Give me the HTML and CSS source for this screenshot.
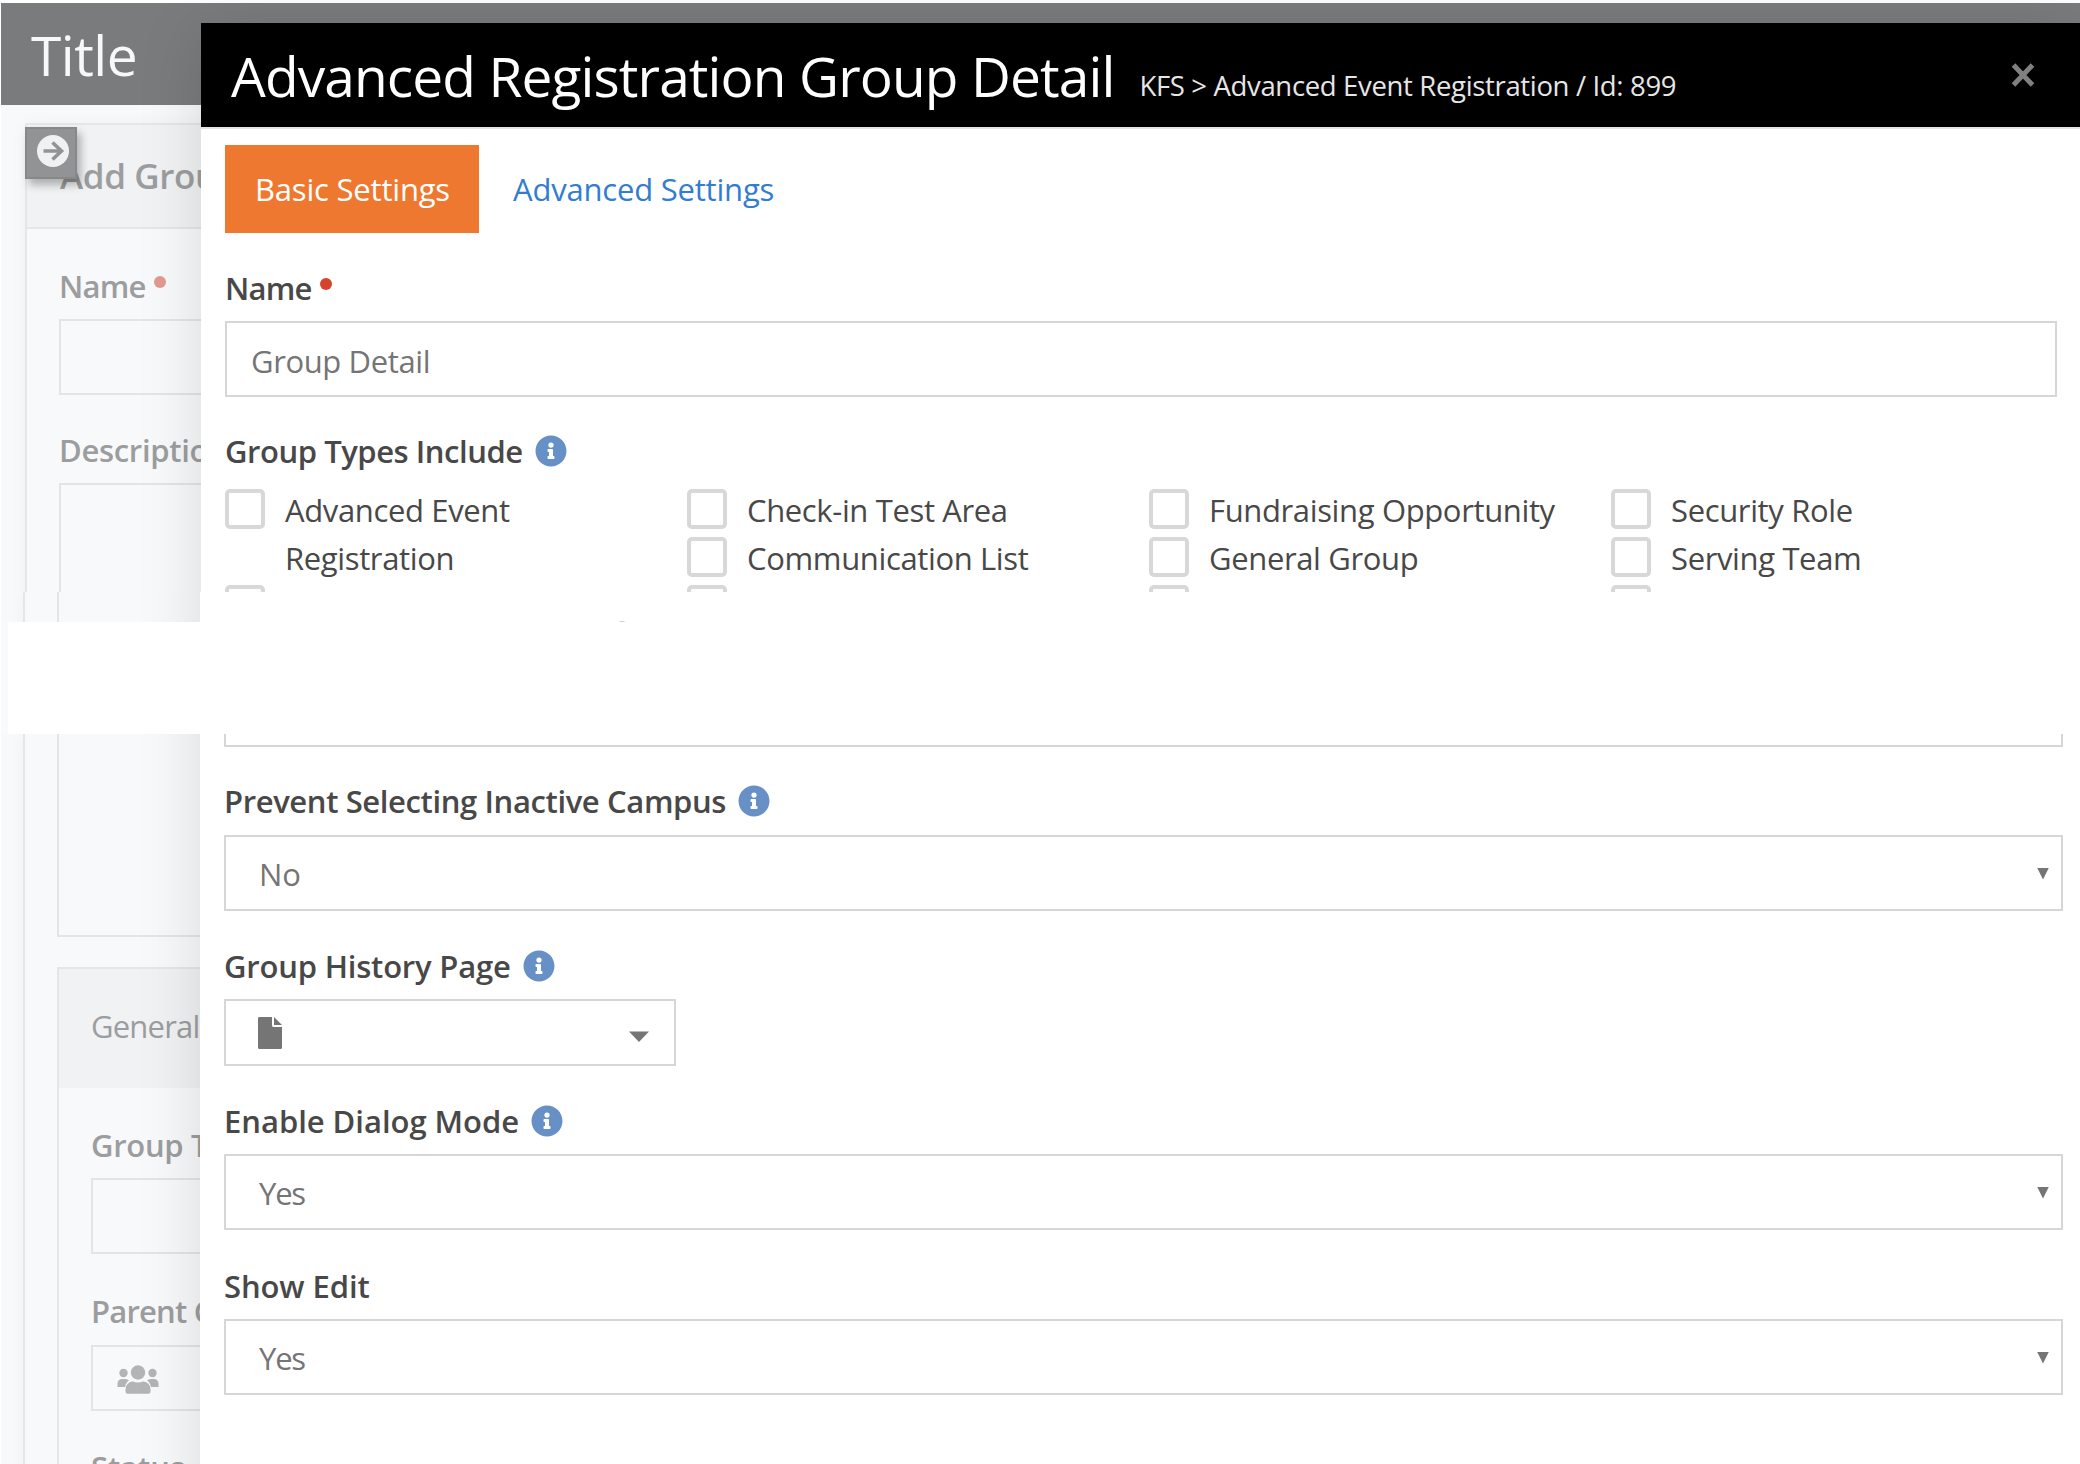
FILE: index.html
```html
<!DOCTYPE html>
<html lang="en">
<head>
<meta charset="utf-8">
<title>Advanced Registration Group Detail</title>
<link rel="stylesheet" href="styles.css">
</head>
<body>
<svg class="defs" width="0" height="0">
  <symbol id="info" viewBox="0 0 512 512"><path fill="currentColor" d="M256 8C119 8 8 119 8 256s111 248 248 248 248-111 248-248S393 8 256 8zm0 110a42 42 0 1 1 0 84 42 42 0 0 1 0-84zm56 254c0 6.600-5.400 12-12 12h-88c-6.600 0-12-5.400-12-12v-24c0-6.600 5.400-12 12-12h12v-64h-12c-6.600 0-12-5.400-12-12v-24c0-6.600 5.400-12 12-12h64c6.600 0 12 5.400 12 12v100h12c6.600 0 12 5.400 12 12z"/></symbol>
</svg>

<section class="slice slice-top">
  <div class="page">
    <header class="page-header"><h1 class="page-title">Title</h1></header>
    <div class="panel panel-main">
      <div class="panel-heading"><span>Add Group</span></div>
      <div class="panel-body">
        <label class="label label-name"><span>Name</span><i class="dot"></i></label>
        <div class="input"></div>
        <label class="label"><span>Description</span></label>
        <div class="input tall"></div>
      </div>
    </div>
    <button class="drawer-toggle"><svg width="32" height="32" viewBox="0 0 32 32"><circle cx="16" cy="16" r="16" fill="#eff1f2"/><path d="M6.500 16H24M15.500 7.500L24.500 16L15.500 24.500" fill="none" stroke="#929394" stroke-width="3.600"/></svg></button>
  </div>
  <div class="modal modal-start">
    <header class="modal-header">
      <h2 class="modal-title">Advanced Registration Group Detail</h2>
      <small class="modal-sub">KFS &gt; Advanced Event Registration / Id: 899</small>
      <button class="close"><svg width="24" height="24" viewBox="0 0 24 24"><path d="M2.500 2L21.500 22M21.500 2L2.500 22" stroke="#808080" stroke-width="5"/></svg></button>
    </header>
    <div class="modal-body">
      <nav class="tabs"><a class="tab active"><span>Basic Settings</span></a><a class="tab"><span>Advanced Settings</span></a></nav>
      <label class="label label-name"><span>Name</span><i class="dot"></i></label>
      <div class="input text-input"><span>Group Detail</span></div>
      <label class="label label-types"><span>Group Types Include</span><svg class="info"><use href="#info"/></svg></label>
      <div class="checks">
        <div class="col"><div class="check"><i></i><span>Advanced Event<br>Registration</span></div><div class="check"><i></i></div></div>
        <div class="col"><div class="check"><i></i><span>Check-in Test Area</span></div><div class="check"><i></i><span>Communication List</span></div><div class="check"><i></i></div></div>
        <div class="col"><div class="check"><i></i><span>Fundraising Opportunity</span></div><div class="check"><i></i><span>General Group</span></div><div class="check"><i></i></div></div>
        <div class="col"><div class="check"><i></i><span>Security Role</span></div><div class="check"><i></i><span>Serving Team</span></div><div class="check"><i></i></div></div>
      </div>
    </div>
  </div>
</section>

<section class="slice slice-mid">
  <div class="page"><div class="panel panel-rest"><div class="panel-body"><div class="input tall"></div></div></div></div>
  <div class="modal modal-rest"><svg class="info info-cut"><use href="#info"/></svg></div>
</section>

<div class="gap"></div>

<section class="slice slice-bottom">
  <div class="page">
    <div class="panel panel-rest">
      <div class="panel-body">
        <div class="input end"></div>
        <div class="panel panel-inner">
          <div class="panel-heading"><span>General</span></div>
          <div class="panel-body">
            <label class="label label-group"><span>Group Type</span></label>
            <div class="input"></div>
            <label class="label label-parent"><span>Parent Group</span></label>
            <div class="input picker"><svg width="42" height="29" viewBox="0 0 42 29" fill="#b2b4b6"><circle cx="21" cy="7.500" r="7.200"/><circle cx="6.500" cy="8" r="4.200"/><circle cx="35.500" cy="8" r="4.200"/><path d="M0.500 22v-3.500a4.500 4.500 0 0 1 4.500-4.500h3.500q2 0 3.500 1.500Q8.500 18 8.200 22zM41.500 22v-3.500a4.500 4.500 0 0 0-4.500-4.500h-3.500q-2 0-3.500 1.500Q33.500 18 33.800 22zM8.500 26.500V24a7.500 7.500 0 0 1 7.500-7.500q5 2 10 0a7.500 7.500 0 0 1 7.500 7.500v2.500a2.300 2.300 0 0 1-2.300 2.300H10.800a2.300 2.300 0 0 1-2.300-2.300z"/></svg></div>
            <label class="label label-status"><span>Status</span></label>
          </div>
        </div>
      </div>
    </div>
  </div>
  <div class="modal modal-rest">
    <div class="modal-body">
      <div class="input end"></div>
      <label class="label label-prevent"><span>Prevent Selecting Inactive Campus</span><svg class="info"><use href="#info"/></svg></label>
      <div class="input select"><span>No</span><i class="arrow"></i></div>
      <label class="label label-history"><span>Group History Page</span><svg class="info"><use href="#info"/></svg></label>
      <div class="input page-picker"><svg width="24" height="32" viewBox="0 0 24 32" fill="#757575"><path d="M0 1.500A1.500 1.500 0 0 1 1.500 0H14v8.500A1.500 1.500 0 0 0 15.500 10H24v20.500a1.500 1.500 0 0 1-1.500 1.500h-21A1.500 1.500 0 0 1 0 30.500zM16 0l8 8h-8z"/></svg><svg class="caret" width="20" height="11" viewBox="0 0 20 11" fill="#757575"><path d="M0 .5h20L10 11z"/></svg></div>
      <label class="label label-dialog"><span>Enable Dialog Mode</span><svg class="info"><use href="#info"/></svg></label>
      <div class="input select"><span class="yes">Yes</span><i class="arrow"></i></div>
      <label class="label label-edit"><span>Show Edit</span></label>
      <div class="input select"><span class="yes">Yes</span><i class="arrow"></i></div>
    </div>
  </div>
</section>
</body>
</html>
```
FILE: styles.css
```css
* { box-sizing: border-box; }
body { margin: 0; width: 2080px; height: 1464px; overflow: hidden; background: #fff; font-family: "Open Sans", "Noto Sans", sans-serif; font-size: 31px; color: #484848; display: flex; flex-direction: column; }
h1, h2, small { margin: 0; font-weight: 400; }
button { border: 0; padding: 0; background: none; }
svg { display: block; flex: none; }
.defs { position: absolute; }

/* The view is shown in stacked strips, with a blank gap between them */
.slice { position: relative; overflow: hidden; flex: none; padding-left: 1px; }
.slice-top { height: 592px; padding-top: 3px; }
.slice-mid { height: 30px; }
.gap { height: 112px; flex: none; margin-left: 8px; background: #fff; box-shadow: -7px 0 0 #f9fafc; }
.slice-bottom { height: 730px; }

/* Page behind the dialog */
.page { height: 100%; background: #f8f9fb; color: #9c9d9e; position: relative; }
.page-header { height: 102px; background: #7a7b7d; display: flex; align-items: center; padding: 1px 0 0 30px; }
.page-title { font-size: 55px; line-height: 80px; color: #f7f8fa; letter-spacing: -0.5px; }
.panel { border: 2px solid #e5e6e8; }
.panel-main { margin: 18px 0 0 24px; height: 900px; box-shadow: 0 0 16px rgba(0,0,0,.04); }
.panel-heading { background: #f1f2f4; display: flex; align-items: center; }
.panel-main > .panel-heading { height: 104px; border-bottom: 2px solid #e5e6e8; padding: 0 0 2px 33px; font-size: 35px; font-weight: 600; letter-spacing: -0.4px; }
.panel-body { padding: 2px 32px; }
.panel-rest { margin-left: 22px; border-width: 0 2px; height: 900px; box-shadow: 0 0 16px rgba(0,0,0,.04); }
.panel-rest > .panel-body { padding: 0 32px; }
.panel-inner { margin-top: 30px; height: 700px; }
.panel-inner > .panel-heading { height: 119px; padding: 0 0 5px 32px; letter-spacing: -0.8px; }
.panel-inner > .panel-body { padding: 2px 32px; }

/* Form fields */
.label { display: flex; align-items: center; height: 40px; margin: 34px 0 14px; padding-top: 1px; line-height: 39px; font-weight: 600; letter-spacing: -0.3px; }
.label span { white-space: nowrap; padding-top: 1px; }
.label-name { letter-spacing: -0.8px; }
.label-types { margin: 33px 0 15px; letter-spacing: -0.45px; }
.label-prevent { margin: 33px 0 15px; letter-spacing: -0.38px; }
.label-history { letter-spacing: -0.2px; }
.label-dialog { letter-spacing: -0.03px; }
.label-parent { margin: 36px 0 15px; letter-spacing: -0.8px; }
.label-status, .label-edit { margin-top: 35px; letter-spacing: -0.1px; }
.dot { width: 12px; height: 12px; border-radius: 50%; background: #d6432c; margin: -8px 0 0 8px; }
.page .dot { background: #e29a90; }
.info { width: 32px; height: 32px; color: #6790c6; margin: 1px 0 0 12px; }

.input { height: 76px; border: 2px solid #d6d6d6; background: #fff; }
.page .input { background: none; border-color: #e3e4e6; }
.page .tall { height: 600px; }
.page .end { height: 203px; border-top: 0; }
.slice-mid .tall { border-top: 0; }
.text-input { padding: 2px 24px 0; color: #757575; line-height: 72px; letter-spacing: -0.38px; }

.drawer-toggle { position: absolute; left: 24px; top: 124px; width: 52px; height: 52px; border: 2px solid #87888a; background: #929394; box-shadow: 4px 6px 8px rgba(0,0,0,.28); display: flex; justify-content: center; padding-top: 6px; padding-left: 4px; }

/* Dialog */
.modal { position: absolute; background: #fff; box-shadow: 0 10px 60px rgba(0,0,0,.13); }
.modal-start { left: 201px; top: 23px; width: 1879px; height: 800px; }
.modal-rest { left: 200px; top: -100px; bottom: -100px; width: 1880px; padding-top: 100px; }
.modal-header { height: 106px; background: #000; border-bottom: 2px solid #e5e5e5; display: flex; align-items: baseline; padding: 13px 45px 0 30px; }
.modal-title { font-size: 55px; line-height: 80px; color: #fff; white-space: nowrap; letter-spacing: -0.88px; }
.modal-sub { font-size: 27.500px; line-height: 36px; color: #e6e6e6; margin-left: 25px; white-space: nowrap; letter-spacing: -0.34px; position: relative; top: -1px; }
.close { margin-left: auto; align-self: flex-start; padding-top: 27px; }
.modal-body { padding: 16px 23px 0 24px; }
.modal-rest .modal-body { padding: 0 17px 0 24px; }
.modal .end { height: 13px; border-top: 0; }

.tabs { display: flex; height: 88px; line-height: 89px; letter-spacing: -0.2px; }
.tab { padding-left: 30px; width: 254px; color: #337dd0; white-space: nowrap; }
.tab.active { background: #ee7830; color: #fff; }
.tab + .tab { padding-left: 34px; }

.checks { display: grid; grid-template-columns: repeat(4, 462px); line-height: 48px; letter-spacing: -0.36px; }
.check { display: flex; gap: 20px; height: 48px; white-space: nowrap; }
.col:first-child .check:first-child { height: 96px; }
.check span { padding-top: 1px; }
.check i { width: 40px; height: 40px; flex: none; border: 4px solid #d8d8d8; border-radius: 5px; margin: 4px 0; }

.select { display: flex; align-items: center; justify-content: space-between; padding: 1px 12px 0 33px; color: #757575; }
.yes { letter-spacing: -1.2px; }
.arrow { width: 12px; height: 12px; background: #757575; clip-path: polygon(0 0, 100% 0, 50% 100%); }
.page-picker { width: 452px; height: 67px; display: flex; align-items: center; justify-content: space-between; padding: 0 25px 0 32px; }
.caret { margin-top: 8px; }
.page .picker { height: 66px; padding: 18px 0 0 24px; }
.info-cut { position: absolute; left: 406px; top: 129px; margin: 0; }
```
